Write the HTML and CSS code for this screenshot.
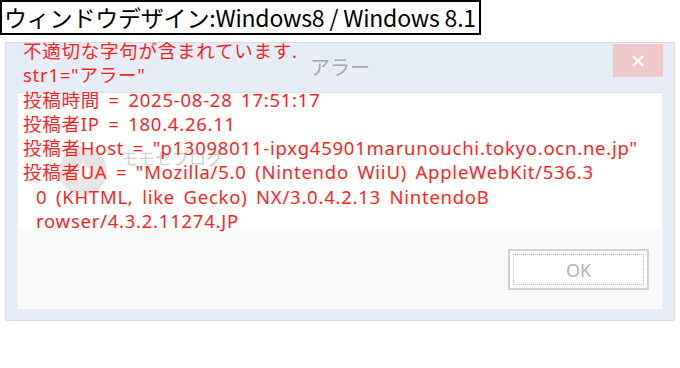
FILE: index.html
```html
<!DOCTYPE html>
<html lang="ja">
<head>
<meta charset="utf-8">
<link rel="stylesheet" href="styles.css">
</head>
<body>
<div class="caption">ウィンドウデザイン:Windows8 / Windows 8.1</div>
<div class="dialog">
  <div class="frame">
    <div class="titlebar">
      <span class="title">アラー</span>
      <span class="close">
        <svg width="14" height="14" viewBox="0 0 14 14"><path d="M2 2 L12 12 M12 2 L2 12" stroke="#fff" stroke-width="2.2" fill="none"/></svg>
      </span>
    </div>
    <div class="panel">
      <div class="content"></div>
      <div class="footer">
        <div class="okbtn"><span class="okinner">OK</span></div>
      </div>
    </div>
  </div>
  <div class="message">
    <div class="line">不適切な字句が含まれています.</div>
    <div class="line">str1="アラー"</div>
    <div class="line">投稿時間 = 2025-08-28 17:51:17</div>
    <div class="line">投稿者IP = 180.4.26.11</div>
    <div class="line">投稿者Host = "p13098011-ipxg45901marunouchi.tokyo.ocn.ne.jp"</div>
    <div class="line">投稿者UA = "Mozilla/5.0 (Nintendo WiiU) AppleWebKit/536.3</div>
    <div class="line indent">0 (KHTML, like Gecko) NX/3.0.4.2.13 NintendoB</div>
    <div class="line indent">rowser/4.3.2.11274.JP</div>
  </div>
  <div class="watermark">
    <span class="wm-circle">
      <svg width="28" height="28" viewBox="0 0 30 30"><path d="M15 3 L18.5 11.5 L27 12 L20.5 17.5 L22.5 26 L15 21.5 L7.5 26 L9.5 17.5 L3 12 L11.5 11.5 Z" fill="rgba(255,255,255,0.85)"/></svg>
    </span>
    <span class="wm-text">モモセブログ</span>
  </div>
</div>
</body>
</html>
```
FILE: styles.css
```css
html, body {
  margin: 0;
  padding: 0;
  background: #fff;
}
body {
  font-family: "Noto Sans", "Noto Sans CJK JP", sans-serif;
}
.caption {
  display: inline-block;
  border: 2px solid #000;
  font-family: "Noto Sans CJK JP", sans-serif;
  font-size: 23px;
  line-height: 31px;
  padding: 0 3px 0 2px;
  color: #000;
  letter-spacing: -0.2px;
}
.dialog {
  position: relative;
  margin: 7px 0 0 5px;
  width: 668px;
  height: 277px;
  border: 1px solid #d4dce6;
  background: #e6edf7;
  display: grid;
  grid-template-rows: 100%;
}
.frame, .message {
  grid-area: 1 / 1;
}
.frame {
  display: flex;
  flex-direction: column;
}
.titlebar {
  height: 49px;
  flex: none;
  display: flex;
  justify-content: center;
  align-items: flex-start;
  position: relative;
}
.title {
  font-family: "Noto Sans CJK JP", sans-serif;
  font-size: 20px;
  color: #a9a9a9;
  line-height: 24px;
  margin-top: 12px;
}
.close {
  position: absolute;
  right: 11px;
  top: 1px;
  width: 50px;
  height: 33px;
  background: #efc9ca;
  display: flex;
  align-items: center;
  justify-content: center;
}
.panel {
  margin: 0 12px;
  display: flex;
  flex-direction: column;
  border-top: 1px solid #dde3ea;
}
.content {
  height: 136px;
  background: #fff;
}
.footer {
  height: 80px;
  background: #f9f9f9;
  display: flex;
  justify-content: flex-end;
  align-items: flex-start;
  padding-top: 20px;
  padding-right: 13px;
  box-sizing: border-box;
}
.okbtn {
  width: 141px;
  height: 41px;
  box-sizing: border-box;
  border: 2px solid #d2d2d2;
  background: #fff;
  padding: 3px;
  display: flex;
}
.okinner {
  flex: 1;
  border: 1px dotted #b8b8b8;
  display: flex;
  align-items: center;
  justify-content: center;
  font-size: 18px;
  color: #b4b4b4;
  font-family: "Noto Sans", sans-serif;
}
.message {
  margin-top: -4px;
  padding-left: 17px;
  color: #ff1f1f;
  font-size: 18.5px;
  line-height: 24.3px;
  letter-spacing: 0.75px;
  word-spacing: 3px;
  z-index: 1;
  align-self: start;
}
.line {
  white-space: pre;
}
.line.indent {
  padding-left: 13px;
}
.watermark {
  position: absolute;
  left: 53px;
  top: 104px;
  z-index: 0;
  display: flex;
  align-items: flex-start;
  gap: 14px;
}
.wm-circle {
  width: 48px;
  height: 48px;
  border-radius: 50%;
  background: rgba(190, 190, 190, 0.4);
  display: flex;
  align-items: center;
  justify-content: center;
}
.wm-text {
  font-family: "Noto Sans CJK JP", sans-serif;
  font-size: 17px;
  line-height: 20px;
  color: rgba(160, 160, 160, 0.5);
  margin-top: 1px;
}
```
